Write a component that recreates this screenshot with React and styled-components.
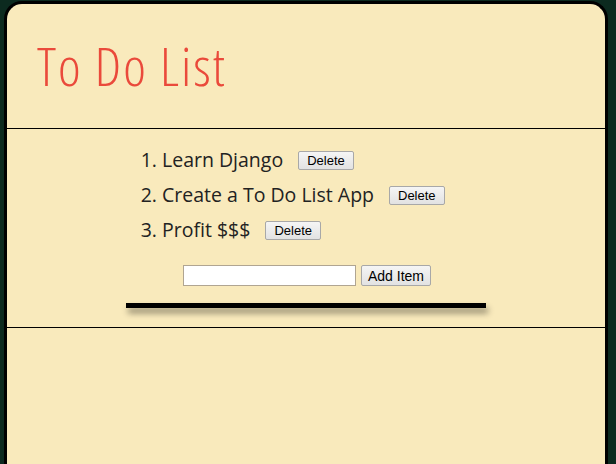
import React, { useState } from "react";
import styled, { createGlobalStyle } from "styled-components";

const Global = createGlobalStyle`
  html, body {
    margin: 0;
    height: 100%;
    background: #0c2a1f;
  }
  #root {
    height: 100%;
  }
`;

const Page = styled.div`
  height: 100%;
  padding: 1px 8px 0 4px;
  box-sizing: border-box;
  display: flex;
`;

const Card = styled.div`
  flex: 1;
  background: #f9eabc;
  border: 3px solid #000;
  border-bottom: none;
  border-radius: 18px 18px 0 0;
  display: flex;
  flex-direction: column;
`;

const Header = styled.header`
  height: 124px;
  border-bottom: 1px solid #000;
  padding-left: 30px;
  display: flex;
  align-items: center;
`;

const Title = styled.h1`
  margin: 0 0 2px;
  font-family: "Open Sans", "Liberation Sans", sans-serif;
  font-weight: 300;
  font-size: 54px;
  font-stretch: 75%;
  letter-spacing: 2px;
  color: #ea4a3b;
`;

const Main = styled.main`
  border-bottom: 1px solid #000;
  padding: 16px 0 19px;
  display: flex;
  flex-direction: column;
  align-items: center;
`;

const List = styled.ol`
  align-self: flex-start;
  margin: 0 0 0 155px;
  padding: 0;
  font-family: "Open Sans", "Liberation Sans", sans-serif;
  font-size: 19.5px;
  color: #222;
`;

const Item = styled.li`
  height: 35px;
  line-height: 30px;
`;

const Btn = styled.button`
  font-family: Arial, "Liberation Sans", sans-serif;
  font-size: ${(p) => (p.$big ? "14px" : "13px")};
  color: #000;
  background: linear-gradient(#f5f5f5, #e2e2e2);
  border: 1px solid #a8a8a8;
  border-radius: 2px;
  padding: ${(p) => (p.$big ? "1px 6px" : "1px 8px")};
  margin-left: ${(p) => (p.$gap ? p.$gap : "0")};
  vertical-align: 2px;
  height: ${(p) => (p.$big ? "21px" : "19px")};
`;

const Form = styled.form`
  display: flex;
  gap: 5px;
  margin: 15px 0 17px 2px;
`;

const Input = styled.input`
  width: 167px;
  height: 15px;
  border: 1px solid #b0a592;
  background: #fff;
  padding: 2px;
`;

const Rule = styled.div`
  width: 360px;
  height: 5px;
  background: #000;
  box-shadow: 2px 5px 6px rgba(0, 0, 0, 0.45);
`;

export default function App() {
  const [items] = useState(["Learn Django", "Create a To Do List App", "Profit $$$"]);
  return (
    <>
      <Global />
      <Page>
        <Card>
          <Header>
            <Title>To Do List</Title>
          </Header>
          <Main>
            <List>
              {items.map((t) => (
                <Item key={t}>
                  {t}
                  <Btn $gap="15px">Delete</Btn>
                </Item>
              ))}
            </List>
            <Form onSubmit={(e) => e.preventDefault()}>
              <Input type="text" />
              <Btn $big>Add Item</Btn>
            </Form>
            <Rule />
          </Main>
        </Card>
      </Page>
    </>
  );
}
